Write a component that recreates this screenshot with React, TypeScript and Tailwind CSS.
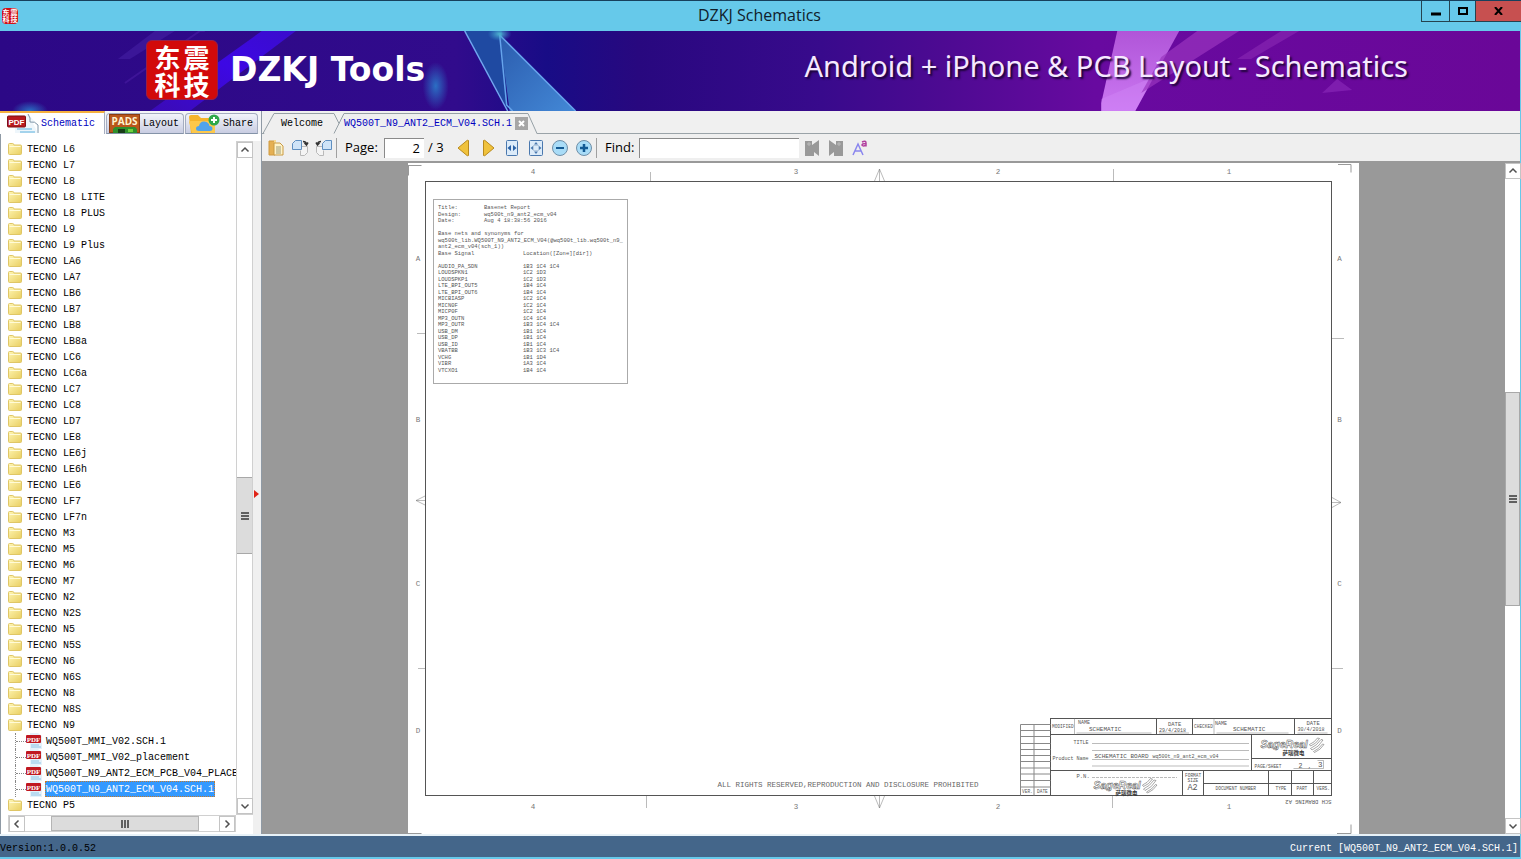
import React, { useState } from 'react';

const MODELS = [
  'L6', 'L7', 'L8', 'L8 LITE', 'L8 PLUS', 'L9', 'L9 Plus', 'LA6', 'LA7', 'LB6', 'LB7', 'LB8', 'LB8a',
  'LC6', 'LC6a', 'LC7', 'LC8', 'LD7', 'LE8', 'LE6j', 'LE6h', 'LE6', 'LF7', 'LF7n', 'M3', 'M5', 'M6',
  'M7', 'N2', 'N2S', 'N5', 'N5S', 'N6', 'N6S', 'N8', 'N8S', 'N9',
];

const FILES = [
  'WQ500T_MMI_V02.SCH.1',
  'WQ500T_MMI_V02_placement',
  'WQ500T_N9_ANT2_ECM_PCB_V04_PLACEMENT',
  'WQ500T_N9_ANT2_ECM_V04.SCH.1',
];

const REPORT_HEAD: [number, string, string][] = [
  [92, 'Title:', 'Basenet Report'],
  [105, 'Design:', 'wq500t_n9_ant2_ecm_v04'],
  [118, 'Date:', 'Aug 4 18:38:56 2016'],
];

const NETS: [string, string][] = [
  ['AUDIO_PA_SDN', '1B3 1C4 1C4'],
  ['LOUDSPKN1', '1C2 1D3'],
  ['LOUDSPKP1', '1C2 1D3'],
  ['LTE_BPI_OUT5', '1B4 1C4'],
  ['LTE_BPI_OUT6', '1B4 1C4'],
  ['MICBIASP', '1C2 1C4'],
  ['MICN0F', '1C2 1C4'],
  ['MICP0F', '1C2 1C4'],
  ['MP3_OUTN', '1C4 1C4'],
  ['MP3_OUTR', '1B3 1C4 1C4'],
  ['USB_DM', '1B1 1C4'],
  ['USB_DP', '1B1 1C4'],
  ['USB_ID', '1B1 1C4'],
  ['VBATBB', '1B3 1C3 1C4'],
  ['VCHG', '1B1 1D4'],
  ['VIBR', '1A3 1C4'],
  ['VTCXO1', '1B4 1C4'],
];

// [x, baseline, size, text] in drawing units
const BLOCK_TEXT: [number, number, number, string][] = [
  [1288, 1129, 9, 'MODIFIED'],
  [1340, 1122, 10, 'NAME'],
  [1362, 1136, 12, 'SCHEMATIC'],
  [1520, 1125, 11, 'DATE'],
  [1502, 1137, 10, '29/4/2018'],
  [1572, 1129, 9, 'CHECKED'],
  [1614, 1123, 10, 'NAME'],
  [1650, 1135, 12, 'SCHEMATIC'],
  [1797, 1124, 11, 'DATE'],
  [1779, 1136, 10, '30/4/2018'],
  [1331, 1161, 10, 'TITLE'],
  [1289, 1193, 10, 'Product Name'],
  [1373, 1190, 12, 'SCHEMATIC BOARD'],
  [1489, 1190, 10, 'wq500t_n9_ant2_ecm_v04'],
  [1693, 1209, 9, 'PAGE/SHEET'],
  [1781, 1209, 13, '2'],
  [1800, 1209, 11, ','],
  [1820, 1208, 15, '3'],
  [1337, 1229, 11, 'P.N.'],
  [1554, 1227, 9, 'FORMAT'],
  [1559, 1237, 9, 'SIZE'],
  [1559, 1254, 17, 'A2'],
  [1615, 1253, 9, 'DOCUMENT NUMBER'],
  [1735, 1253, 9, 'TYPE'],
  [1777, 1253, 9, 'PART'],
  [1817, 1253, 9, 'VERS.'],
  [1228, 1260, 9, 'VER.'],
  [1258, 1260, 9, 'DATE'],
];

const FolderIcon = () => (
  <svg viewBox="0 0 14 14" className="h-3.5 w-3.5 shrink-0" aria-hidden="true">
    <defs>
      <linearGradient id="folder" x1="0" y1="0" x2="1" y2="1">
        <stop offset="0" stopColor="#fff6b4" />
        <stop offset="1" stopColor="#e9cf62" />
      </linearGradient>
    </defs>
    <path d="M.5 2.500q0-1 1-1h3.200q.8 0 1 .8l.2.700h6.600q1 0 1 1v7.500q0 1-1 1h-11q-1 0-1-1z" fill="url(#folder)" stroke="#dfc666" />
    <path d="M1.500 4.500h11" stroke="#fffbd8" />
  </svg>
);

const PdfIcon = () => (
  <svg viewBox="0 0 16 16" className="h-4 w-4 shrink-0" aria-hidden="true">
    <path d="M4 0h8l4 3v13H4z" fill="#e4f1fa" />
    <path d="M5 12h8M5 14h10" stroke="#8fc4e6" />
    <rect x="0" y="2" width="15" height="8" rx="1" fill="#c01820" />
    <text x="7.5" y="8.5" textAnchor="middle" fontSize="7" fontWeight="700" fill="#fff" fontFamily="Liberation Serif, serif">PDF</text>
  </svg>
);

const PdfTabIcon = () => (
  <svg viewBox="0 0 32 19" className="h-[19px] w-8" aria-hidden="true">
    <path d="M8 1h14l8 9v9H8z" fill="#eef6fb" />
    <path d="M21 0q3 4 2 8 5-1 8 3v8" fill="#fff" stroke="#7f96a8" />
    <path d="M10 15h15M13 18h15" stroke="#a4d3ec" strokeWidth="2" />
    <rect x="0.5" y="2" width="18" height="11" rx="1" fill="#b81a1f" stroke="#7c1014" />
    <text x="9.5" y="10.5" textAnchor="middle" fontSize="8" fontWeight="700" fill="#fff" fontFamily="Liberation Sans, sans-serif">PDF</text>
  </svg>
);

const PadsTabIcon = () => (
  <svg viewBox="0 0 31 19" className="h-[19px] w-[31px]" aria-hidden="true">
    <rect width="31" height="19" fill="#b9561b" />
    <rect x=".5" y=".5" width="30" height="18" fill="none" stroke="#8a3b10" />
    <text x="15.5" y="11" textAnchor="middle" fontSize="10" fontWeight="700" fill="#fff3cf" fontFamily="Open Sans, sans-serif">PADS</text>
    <path d="M4 15l2-2h20l2 2v4H4z" fill="#2f8f2c" />
    <rect x="9" y="15" width="7" height="4" fill="#173d17" />
    <rect x="19" y="15" width="5" height="3" fill="#6fd13f" />
  </svg>
);

const ShareTabIcon = () => (
  <svg viewBox="0 0 32 19" className="h-[19px] w-8" aria-hidden="true">
    <path d="M1 3q0-2 2-2h7l3 3h10q2 0 2 2v13H3z" fill="#f6b42b" />
    <path d="M1 8q0-1 2-1h22q2 0 2 1v11H4z" fill="#fdc84a" />
    <path d="M11 17q-3 0-3-2.500t3-2.500q1-5 5.500-4.500t5 4.500q3 0 3 2.500t-3 2.500z" fill="#4fa3ec" />
    <circle cx="26" cy="6" r="5.500" fill="#2fa84a" />
    <path d="M23 6h6M26 3v6" stroke="#fff" strokeWidth="2" />
  </svg>
);

type Glyph = 'up' | 'down' | 'left' | 'right';

const CHEVRONS: Record<Glyph, string> = {
  up: 'M1.500 6.500 5 3l3.500 3.500',
  down: 'M1.500 3.500 5 7l3.500-3.500',
  left: 'M6.500 1.500 3 5l3.500 3.500',
  right: 'M3.500 1.500 7 5 3.500 8.500',
};

const ScrollButton: React.FC<{ dir: Glyph }> = ({ dir }) => (
  <button
    type="button"
    aria-label={`Scroll ${dir}`}
    className="flex h-4 w-4 shrink-0 items-center justify-center border border-[#c4c4c4] bg-white"
  >
    <svg viewBox="0 0 10 10" className="h-2.5 w-2.5">
      <path d={CHEVRONS[dir]} fill="none" stroke="#505050" strokeWidth="1.500" />
    </svg>
  </button>
);

const Grip: React.FC<{ vertical?: boolean }> = ({ vertical }) => (
  <svg viewBox="0 0 8 8" className={vertical ? 'h-2 w-2' : 'h-2 w-2 rotate-90'}>
    <path d="M0 1h8M0 4h8M0 7h8" stroke="#606060" strokeWidth="2" />
  </svg>
);

const Banner = () => (
  <header className="relative flex h-20 shrink-0 items-center overflow-hidden bg-[#310a8c]">
    <svg viewBox="0 0 1521 80" preserveAspectRatio="none" className="absolute inset-0 h-full w-full" aria-hidden="true">
      <defs>
        <linearGradient id="base">
          <stop offset="0" stopColor="#2c0886" />
          <stop offset=".3" stopColor="#310b8c" />
          <stop offset=".36" stopColor="#180c86" />
          <stop offset=".42" stopColor="#28087f" />
          <stop offset=".54" stopColor="#380a8c" />
          <stop offset=".62" stopColor="#4d0a92" />
          <stop offset=".72" stopColor="#680aa0" />
          <stop offset="1" stopColor="#6a0798" />
        </linearGradient>
        <linearGradient id="shard" x1="0" y1="0" x2="1" y2="1">
          <stop offset="0" stopColor="#2b5cae" />
          <stop offset="1" stopColor="#4388d6" />
        </linearGradient>
        <linearGradient id="pink" x1="0" y1="0" x2="0" y2="1">
          <stop offset="0" stopColor="#b055d8" />
          <stop offset="1" stopColor="#cb78f2" />
        </linearGradient>
        <linearGradient id="beam" x1="1" y1="0" x2="0" y2="1">
          <stop offset="0" stopColor="#3a0ccc" />
          <stop offset=".45" stopColor="#3d08e4" />
          <stop offset="1" stopColor="#3a0bb5" />
        </linearGradient>
        <radialGradient id="glow">
          <stop offset="0" stopColor="#2b6fc4" />
          <stop offset="1" stopColor="#2b6fc4" stopOpacity="0" />
        </radialGradient>
        <radialGradient id="spark">
          <stop offset="0" stopColor="#4fb8d0" />
          <stop offset="1" stopColor="#3b8fd0" stopOpacity="0" />
        </radialGradient>
      </defs>
      <rect width="1521" height="80" fill="url(#base)" />
      <path d="M262 0h34L190 80h-40z" fill="url(#beam)" />
      <path d="M205 0h-5L125 52" fill="none" stroke="#4a1da4" strokeWidth="2" opacity=".6" />
      <path d="M155 0h20l-45 28h-12z" fill="#4420a4" opacity=".6" />
      <ellipse cx="436" cy="55" rx="13" ry="24" fill="url(#glow)" />
      <ellipse cx="30" cy="80" rx="18" ry="10" fill="url(#glow)" />
      <path d="M465 0h37l6 78z" fill="#1f4aa2" />
      <path d="M465 0 508 80" stroke="#70a8f0" strokeWidth="1.500" />
      <path d="M500 4l76 76h-66z" fill="url(#shard)" />
      <path d="M500 4l76 76M500 4l7 70 6 6" fill="none" stroke="#66a4ec" strokeWidth="1.500" />
      <ellipse cx="500" cy="3" rx="12" ry="7" fill="url(#spark)" />
      <path d="M1118 0h62l-44 80h-34v-8z" fill="url(#pink)" />
      <path d="M1102 68l52-22-18 34h-34z" fill="#d48cf8" opacity=".35" />
      <path d="M1198 0h42l-98 62 20-36z" fill="#9a35bf" opacity=".7" />
      <path d="M1282 0h18l-48 28h-14z" fill="#8a2ab4" opacity=".6" />
      <path d="M1338 48l15 11-30 3z" fill="#8726b6" opacity=".7" />
    </svg>
    <div className="relative flex w-full items-center justify-between pr-28 pb-0.5 pl-[146px]">
      <div className="flex items-center gap-3">
        <div className="grid h-[60px] w-[72px] grid-cols-2 place-content-center justify-items-center rounded-md border border-[#96204a] bg-[#d20a0a] px-1.5 font-['Noto_Sans_CJK_SC',sans-serif] text-[26px] leading-[27px] font-bold text-white">
          <span>东</span>
          <span>震</span>
          <span>科</span>
          <span>技</span>
        </div>
        <h1 className="font-['DejaVu_Sans',sans-serif] text-[33px] leading-10 font-bold whitespace-nowrap text-white">DZKJ Tools</h1>
      </div>
      <p className="pb-2 font-['Noto_Sans',sans-serif] text-[29px] leading-9 whitespace-nowrap text-[#f6e9ff] [text-shadow:2px_2px_2px_#1c0436]">
        Android + iPhone &amp; PCB Layout - Schematics
      </p>
    </div>
  </header>
);

const VendorMark: React.FC<{ x: number; y: number }> = ({ x, y }) => (
  <g transform={`translate(${x} ${y})`} fill="none" stroke="#555">
    <text x="0" y="20" fontSize="21" fontStyle="italic" fontWeight="700" fontFamily="Liberation Sans, sans-serif" strokeWidth="1" fill="#fff">
      SageReal
    </text>
    <text x="44" y="33" fontSize="11" fontWeight="700" fontFamily="Noto Sans CJK SC, sans-serif" fill="#333" stroke="none">
      萨瑞微电
    </text>
    <path d="M98 13q10-4 16-13l4 1q-7 11-18 15zM100 21q13-6 21-18l4 1q-8 14-22 20zM106 27q11-5 18-15l3 1q-7 11-19 16z" />
  </g>
);

const Sheet = () => (
  <svg viewBox="0 0 1902 1342" className="h-full w-auto bg-white font-['Liberation_Mono',monospace]" role="img" aria-label="Schematic page 2">
    <g fill="none" stroke="#555" strokeWidth="2">
      <rect x="35" y="37" width="1812" height="1228" />
      <rect x="1285" y="1111" width="562" height="154" />
      <path d="M1285 1143h562M1285 1215h562M1687 1191h160M1591 1241h256" />
      <path d="M1497 1111v32M1569 1111v32M1773 1111v32M1687 1143v72M1549 1215v50M1591 1215v50M1721 1215v50M1767 1215v50M1811 1215v50" />
    </g>
    <g fill="none" stroke="#777" strokeWidth="1">
      <rect x="51" y="73" width="388" height="368" strokeWidth="2" stroke="#aaa" />
      <path d="M0 5h27M1 5v20M1860 3h26v16M1858 1341h28v-18M0 1341h27" stroke="#999" strokeWidth="2" />
      <path d="M485 18v18M1411 12v24M477 1266v24M1409 1266v24M18 341h16M20 1011h14M1848 351h24M1848 1011h22" />
      <path d="M943 12v24M943 12l-10 24M943 12l10 24M943 1290v-24M943 1290l-10-24M943 1290l10-24" />
      <path d="M16 675h18M16 675l18-9M16 675l18 9M1866 679h-18M1866 679l-18-10M1866 679l-18 10" />
      <path d="M1333 1111v32M1612 1111v32M1337 1140h150M1502 1140h60M1617 1140h144M1779 1140h60M1368 1161h314M1368 1175h314M1368 1193h314M1368 1206h314M1771 1211h60v-16h-12" />
      <path d="M1368 1229h170" strokeDasharray="6 2" />
      <path d="M1285 1123h-60v142M1252 1123v142M1225 1135h60M1225 1147h60M1225 1161h60M1225 1173h60M1225 1185h60M1225 1197h60M1225 1210h60M1225 1222h60M1225 1235h60M1225 1248h60" strokeWidth="2" stroke="#888" />
    </g>
    <g fill="#777" fontSize="15" textAnchor="middle">
      {[21, 1292].map((y) => (
        <React.Fragment key={y}>
          <text x="250" y={y}>4</text>
          <text x="776" y={y}>3</text>
          <text x="1180" y={y}>2</text>
          <text x="1642" y={y}>1</text>
        </React.Fragment>
      ))}
      {[20, 1863].map((x) => (
        <React.Fragment key={x}>
          <text x={x} y="195">A</text>
          <text x={x} y="517">B</text>
          <text x={x} y="845">C</text>
          <text x={x} y="1140">D</text>
        </React.Fragment>
      ))}
    </g>
    <g fill="#555" fontSize="11">
      {REPORT_HEAD.map(([y, label, value]) => (
        <React.Fragment key={label}>
          <text x="60" y={y}>{label}</text>
          <text x="152" y={y}>{value}</text>
        </React.Fragment>
      ))}
      <text x="60" y="144">Base nets and synonyms for</text>
      <text x="60" y="157">wq500t_lib.WQ500T_N9_ANT2_ECM_V04(@wq500t_lib.wq500t_n9_</text>
      <text x="60" y="170">ant2_ecm_v04(sch_1))</text>
      <text x="60" y="183">Base Signal</text>
      <text x="230" y="183">Location([Zone][dir])</text>
      {NETS.map(([net, zones], i) => (
        <React.Fragment key={net}>
          <text x="60" y={209 + i * 13}>{net}</text>
          <text x="230" y={209 + i * 13}>{zones}</text>
        </React.Fragment>
      ))}
    </g>
    <g fill="#555">
      {BLOCK_TEXT.map(([x, y, size, text]) => (
        <text key={`${x}-${y}`} x={x} y={y} fontSize={size}>{text}</text>
      ))}
      <text x="619" y="1247" fontSize="15" fill="#666">ALL RIGHTS RESERVED,REPRODUCTION AND DISCLOSURE PROHIBITED</text>
      <text transform="translate(1847 1273) rotate(180)" fontSize="11">SCH DRAWING A2</text>
    </g>
    <VendorMark x={1705} y={1150} />
    <VendorMark x={1371} y={1231} />
  </svg>
);

const ToolButton: React.FC<{ label: string; children: React.ReactNode }> = ({ label, children }) => (
  <button type="button" aria-label={label} title={label} className="flex h-6 w-6 items-center justify-center">
    <svg viewBox="0 0 18 18" className="h-[18px] w-[18px]" fill="none">
      {children}
    </svg>
  </button>
);

const Toolbar: React.FC = () => {
  const [page, setPage] = useState('2');
  const [query, setQuery] = useState('');

  return (
    <div className="flex h-[29px] shrink-0 items-center border-b-2 border-[#999] bg-[#efefef] pl-0.5 text-[13px] text-black">
      <ToolButton label="Copy">
        <path d="M2 2h6v14H2z" fill="#e5b053" stroke="#d09a40" />
        <path d="M8 1v15" stroke="#f7d993" strokeWidth="2" />
        <path d="M7 4h6l3 3v9H7z" fill="#fff3c9" stroke="#c99a43" />
        <path d="M9 8h5M9 10h5M9 12h5M9 14h5" stroke="#9c9c7a" />
      </ToolButton>
      <ToolButton label="Rotate right">
        <path d="M10.500 7.500h6v6l-3 3h-4v-5" fill="#f4f4f4" stroke="#b9b9b9" />
        <path d="M1.500 4.500l3-3h6v9h-9z" fill="#cfe4f8" stroke="#5f8fc0" />
        <path d="M12 2.500q3 0 3.500 2.500M13.500 4l2 2 1.500-2.500" stroke="#333" strokeWidth="1.500" />
      </ToolButton>
      <ToolButton label="Rotate left">
        <path d="M7.500 7.500h-6v6l3 3h4v-5" fill="#f4f4f4" stroke="#b9b9b9" />
        <path d="M7.500 4.500l3-3h6v9h-9z" fill="#cfe4f8" stroke="#5f8fc0" />
        <path d="M6 2.500q-3 0-3.500 2.500M4.500 4l-2 2L1 3.500" stroke="#333" strokeWidth="1.500" />
      </ToolButton>
      <div className="mr-2 h-5 w-px bg-[#a0a0a0]" />
      <label htmlFor="page" className="w-[39px]">Page:</label>
      <input
        id="page"
        value={page}
        onChange={(e) => setPage(e.target.value)}
        className="h-5 w-10 border-t border-l border-[#8a8a8a] bg-white pr-1 text-right outline-none"
      />
      <span className="w-7 pl-1">/ 3</span>
      <ToolButton label="Previous page">
        <path d="M13.500 1.500v15q-1 .5-1.500 0L3 9l9-7.500q.500-.5 1.500 0z" fill="#f0c23c" stroke="#b98a1d" />
      </ToolButton>
      <ToolButton label="Next page">
        <path d="M4.500 1.500v15q1 .5 1.500 0L15 9 6 1.500q-.5-.5-1.500 0z" fill="#f0c23c" stroke="#b98a1d" />
      </ToolButton>
      <ToolButton label="Fit width">
        <rect x="3.500" y="1.500" width="11" height="15" rx="1" fill="#dcebf9" stroke="#4a78ae" />
        <path d="M8 6v6L4.500 9zM10 6v6l3.500-3z" fill="#2b62a6" />
      </ToolButton>
      <ToolButton label="Fit page">
        <rect x="2.500" y="1.500" width="13" height="15" rx="1" fill="#dcebf9" stroke="#4a78ae" />
        <rect x="6.500" y="6.500" width="5" height="5" stroke="#8fa8c4" strokeDasharray="1 1" />
        <path d="M9 3l2 2.500H7zM9 15l2-2.500H7zM3.500 9 6 7v4zM14.500 9 12 7v4z" fill="#4a78ae" />
      </ToolButton>
      <ToolButton label="Zoom out">
        <circle cx="9" cy="9" r="7.500" fill="#a9dcf7" stroke="#6f8fa8" />
        <path d="M5 9h8" stroke="#135a94" strokeWidth="2" />
      </ToolButton>
      <ToolButton label="Zoom in">
        <circle cx="9" cy="9" r="7.500" fill="#a9dcf7" stroke="#6f8fa8" />
        <path d="M5 9h8M9 5v8" stroke="#135a94" strokeWidth="2.500" />
      </ToolButton>
      <div className="mr-2 h-5 w-px bg-[#a0a0a0]" />
      <label htmlFor="find" className="w-[34px]">Find:</label>
      <input
        id="find"
        value={query}
        onChange={(e) => setQuery(e.target.value)}
        className="mr-px h-5 w-40 border-t border-l border-[#8a8a8a] bg-white px-1 outline-none"
      />
      <ToolButton label="Find previous">
        <path d="M2 2h7v4l7-5v16l-5-4v4H2z" fill="#999" />
        <path d="M5 4h2v2H5z" stroke="#bbb" />
      </ToolButton>
      <ToolButton label="Find next">
        <path d="M16 2H9v4L2 1v16l5-4v4h9z" fill="#999" />
        <path d="M13 4h-2v2h2z" stroke="#bbb" />
      </ToolButton>
      <ToolButton label="Match case">
        <path d="M2 16 7 5l5 11M4 12h6" stroke="#8a86ee" strokeWidth="1.500" />
        <path d="M11 3q4-2 4 1v3.500M15 4.500q-4 0-4 1.500t4 .5" stroke="#b2409f" strokeWidth="1.500" />
      </ToolButton>
    </div>
  );
};

const SideTab: React.FC<{ label: string; icon: React.ReactNode }> = ({ label, icon }) => (
  <button
    type="button"
    role="tab"
    aria-selected="false"
    className="flex h-[21px] items-center gap-[3px] overflow-hidden rounded-t-sm border border-b-[#8493a8] border-[#a5adc0] bg-linear-to-b from-[#f2f4fa] to-[#c9cde2] pr-1 pl-0.5"
  >
    {icon}
    {label}
  </button>
);

const Sidebar: React.FC = () => {
  const [selected, setSelected] = useState(FILES[3]);

  return (
    <aside className="flex w-[262px] shrink-0 flex-col border-r border-[#8f9aa5] bg-[#f4f5f7]">
      <div role="tablist" className="flex h-[23px] shrink-0 items-end gap-px">
        <button
          type="button"
          role="tab"
          aria-selected="true"
          className="flex h-[23px] w-[105px] items-center gap-0.5 border-t-2 border-r border-t-[#f5b03e] border-r-[#a5adc0] bg-white pl-[7px] text-[#0000c0]"
        >
          <PdfTabIcon />
          Schematic
        </button>
        <SideTab label="Layout" icon={<PadsTabIcon />} />
        <SideTab label="Share" icon={<ShareTabIcon />} />
      </div>
      <div className="flex min-h-0 flex-1 border-l border-[#8f9aa5] bg-white pt-[7px]">
        <div className="flex min-w-0 flex-1 flex-col">
          <div className="flex min-h-0 flex-1">
            <ul role="tree" className="min-w-0 flex-1 overflow-hidden pl-[7px]">
              {MODELS.map((model) => (
                <li key={model} role="treeitem" className="flex h-4 items-center gap-[5px] whitespace-pre">
                  <FolderIcon />
                  TECNO {model}
                </li>
              ))}
              {FILES.map((file) => (
                <li key={file} role="treeitem" aria-selected={file === selected} className="ml-[7px] flex h-4 items-center border-l border-dotted border-[#888]">
                  <span className="w-2.5 shrink-0 border-t border-dotted border-[#888]" />
                  <PdfIcon />
                  <button
                    type="button"
                    onClick={() => setSelected(file)}
                    className={
                      file === selected
                        ? 'ml-[3px] h-4 border border-dotted border-[#c47a2c] bg-[#3399ff] leading-[15px] whitespace-nowrap text-white'
                        : 'ml-1 h-4 whitespace-nowrap'
                    }
                  >
                    {file}
                  </button>
                </li>
              ))}
              <li role="treeitem" className="flex h-4 items-center gap-[5px] whitespace-pre">
                <FolderIcon />
                TECNO P5
              </li>
            </ul>
            <div className="flex w-[17px] shrink-0 flex-col border border-[#d0d0d0] bg-white">
              <ScrollButton dir="up" />
              <div className="grow-[320]" />
              <div className="flex h-[77px] items-center justify-center border-y border-[#a8a8a8] bg-[#dcdcdc]">
                <Grip vertical />
              </div>
              <div className="grow-[244]" />
              <ScrollButton dir="down" />
            </div>
          </div>
          <div className="mr-[17px] mb-0.5 ml-[7px] flex h-[17px] shrink-0 items-center border border-[#d0d0d0] bg-white">
            <ScrollButton dir="left" />
            <div className="grow-[27]" />
            <div className="flex h-full w-[148px] items-center justify-center border border-[#b5b5b5] bg-[#dcdcdc]">
              <Grip />
            </div>
            <div className="grow-[20]" />
            <ScrollButton dir="right" />
          </div>
        </div>
        <div className="flex w-2 flex-col bg-[#f0f0f0]">
          <div className="grow-[350]" />
          <svg viewBox="0 0 5 8" className="ml-px h-2 w-[5px]" aria-hidden="true">
            <path d="M0 0l5 4-5 4z" fill="#e02418" />
          </svg>
          <div className="grow-[336]" />
        </div>
      </div>
    </aside>
  );
};

const DocumentTabs = () => (
  <div role="tablist" className="relative flex h-[23px] shrink-0 items-center border-b border-[#9aa3a8] bg-[#f0f0f0]">
    <svg viewBox="0 0 276 23" className="absolute top-0 left-0 h-[23px] w-[276px]" aria-hidden="true">
      <path d="M2 23 12 2.500h60l5 12 6-12h183l9 20.500z" fill="#efefef" />
      <path d="M1 22.500 12 2.500h60l5 10M72 22.500 82 2.500h184l9 20" fill="none" stroke="#96a0a6" />
    </svg>
    <button type="button" role="tab" aria-selected="false" className="relative ml-[19px] w-[63px] pt-0.5 text-left">
      Welcome
    </button>
    <button type="button" role="tab" aria-selected="true" className="relative pt-0.5 text-[#0000c0]">
      WQ500T_N9_ANT2_ECM_V04.SCH.1
    </button>
    <button type="button" aria-label="Close tab" className="relative mt-[3px] ml-[3px] flex h-[13px] w-[13px] items-center justify-center bg-[#a6a6a6]">
      <svg viewBox="0 0 7 7" className="h-[7px] w-[7px]">
        <path d="M1 1l5 5M6 1 1 6" stroke="#fff" strokeWidth="2" />
      </svg>
    </button>
  </div>
);

const TitleBar = () => (
  <div className="relative flex h-[31px] shrink-0 items-center border-t border-[#17405c] bg-[#66c9ea] pl-0.5">
    <div className="grid h-4 w-4 grid-cols-2 place-content-center justify-items-center rounded-sm bg-[#d01018] font-['Noto_Sans_CJK_SC',sans-serif] text-[7px] leading-[7px] font-bold text-white">
      <span>东</span>
      <span>震</span>
      <span>科</span>
      <span>技</span>
    </div>
    <div className="flex-1 pb-0.5 pl-20 text-center font-['Open_Sans',sans-serif] text-base text-[#10202a]">
      DZKJ Schematics
    </div>
    <div className="flex h-[21px] self-start border-b border-l border-[#25424f]">
      <button type="button" aria-label="Minimize" className="flex w-7 items-center justify-center border-r border-[#25424f]">
        <svg viewBox="0 0 10 10" className="h-2.5 w-2.5"><path d="M0 8h10" stroke="#000" strokeWidth="3" /></svg>
      </button>
      <button type="button" aria-label="Maximize" className="flex w-[26px] items-center justify-center border-r border-[#25424f]">
        <svg viewBox="0 0 10 8" className="h-2 w-2.5"><path d="M1 1h8v6H1z" fill="none" stroke="#000" strokeWidth="2" /></svg>
      </button>
      <button type="button" aria-label="Close" className="flex w-[45px] items-center justify-center bg-[#c75050]">
        <svg viewBox="0 0 9 8" className="h-2 w-[9px]"><path d="M1 0l7 8M8 0 1 8" stroke="#000" strokeWidth="2" /></svg>
      </button>
    </div>
  </div>
);

export default function App() {
  return (
    <div className="flex h-screen flex-col overflow-hidden border-b-2 border-[#66c9ea] bg-[#f0f0f0] font-['Open_Sans',sans-serif]">
      <TitleBar />
      <div className="flex min-h-0 flex-1 flex-col border-r border-[#66c9ea]">
        <Banner />
        <div className="flex min-h-0 flex-1 font-['Liberation_Mono',monospace] text-[10px] text-black">
          <Sidebar />
          <main className="flex min-w-0 flex-1 flex-col">
            <DocumentTabs />
            <div className="font-['Open_Sans',sans-serif]">
              <Toolbar />
            </div>
            <div className="flex min-h-0 flex-1">
              <div className="flex min-w-0 flex-1 justify-center overflow-hidden bg-[#999]">
                <Sheet />
              </div>
              <div className="flex w-[15px] shrink-0 flex-col items-center bg-white">
                <ScrollButton dir="up" />
                <div className="grow-[213]" />
                <div className="flex h-[214px] w-full items-center justify-center border border-[#a8a8a8] bg-[#dcdcdc]">
                  <Grip vertical />
                </div>
                <div className="grow-[213]" />
                <ScrollButton dir="down" />
              </div>
            </div>
          </main>
        </div>
        <footer className="flex h-[23px] shrink-0 items-center justify-between border-t-2 border-[#e8f2f8] bg-[#44668a] pt-1 pr-0.5 font-['Liberation_Mono',monospace] text-[10px]">
          <span className="text-black">Version:1.0.0.52</span>
          <span className="text-white">Current [WQ500T_N9_ANT2_ECM_V04.SCH.1]</span>
        </footer>
      </div>
    </div>
  );
}
